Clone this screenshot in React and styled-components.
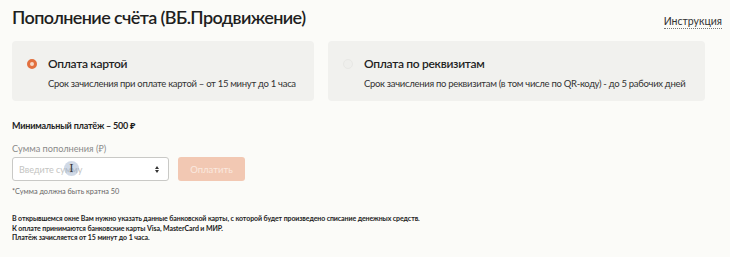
import React, { useState } from "react";
import styled, { createGlobalStyle } from "styled-components";

const GlobalStyle = createGlobalStyle`
  html, body {
    margin: 0;
    padding: 0;
    background: #fbfbf8;
    font-family: Lato, "Noto Sans", sans-serif;
    color: #222;
  }
`;

const Page = styled.div`
  width: 730px;
  height: 257px;
  box-sizing: border-box;
  padding: 5px 8px 0 12px;
  overflow: hidden;
`;

const Header = styled.div`
  display: flex;
  justify-content: space-between;
  align-items: flex-start;
`;

const Title = styled.h1`
  margin: 0;
  font-size: 18px;
  font-weight: 600;
  letter-spacing: -0.6px;
  line-height: 25px;
  color: #1f1f1f;
`;

const HelpLink = styled.a`
  margin-top: 10px;
  font-size: 10.5px;
  color: #333;
  text-decoration: none;
  border-bottom: 1px dotted #777;
  line-height: 13px;
`;

const Methods = styled.div`
  display: flex;
  gap: 14px;
  margin-top: 11px;
`;

const Card = styled.div`
  width: ${(p) => p.$w}px;
  height: 60px;
  box-sizing: border-box;
  background: #f1f1ee;
  border-radius: 4px;
  display: grid;
  grid-template-columns: 21px 1fr;
  align-items: center;
  padding: 15px 0 0 15px;
  align-content: start;
  row-gap: 7px;
  cursor: pointer;
`;

const Radio = styled.span`
  width: 10px;
  height: 10px;
  border-radius: 50%;
  box-sizing: border-box;
  border: ${(p) => (p.$on ? "3px solid #e2703f" : "1px solid #e8e8e5")};
  background: ${(p) => (p.$on ? "#f7d9c8" : "#efefec")};
`;

const CardTitle = styled.div`
  font-size: 12px;
  font-weight: 600;
  letter-spacing: -0.3px;
  line-height: 15px;
  color: #1f1f1f;
`;

const CardNote = styled.div`
  grid-column: 2;
  font-size: 9.5px;
  letter-spacing: -0.3px;
  line-height: 12px;
  color: #333;
  white-space: nowrap;
`;

const MinPay = styled.div`
  margin-top: 19px;
  font-size: 9px;
  font-weight: 700;
  letter-spacing: -0.2px;
  line-height: 12px;
  color: #1f1f1f;
`;

const FieldLabel = styled.div`
  margin-top: 10px;
  font-size: 9.2px;
  color: #8a8a8a;
  line-height: 13px;
`;

const FieldRow = styled.div`
  display: flex;
  gap: 9px;
  margin-top: 2px;
`;

const InputBox = styled.div`
  position: relative;
  width: 157px;
  height: 24px;
  box-sizing: border-box;
  border: 1px solid #c9c9c6;
  border-radius: 3px;
  background: #fff;
  display: flex;
  align-items: center;
`;

const Input = styled.input`
  flex: 1;
  min-width: 0;
  border: none;
  outline: none;
  background: transparent;
  font-family: inherit;
  font-size: 9px;
  padding: 0 6px;
  color: #222;
  &::placeholder {
    color: #c4c4c2;
  }
`;

const Spinner = styled.span`
  display: flex;
  flex-direction: column;
  align-items: center;
  margin-right: 9px;
  gap: 1px;
  &::before, &::after {
    content: "";
    width: 0;
    height: 0;
    border-left: 2.5px solid transparent;
    border-right: 2.5px solid transparent;
  }
  &::before {
    border-bottom: 3px solid #333;
  }
  &::after {
    border-top: 3px solid #333;
  }
`;

/* mouse cursor highlight captured in the screenshot */
const CursorMark = styled.span`
  position: absolute;
  left: 51px;
  top: 3px;
  width: 15px;
  height: 15px;
  border-radius: 50%;
  background: rgba(150, 170, 200, 0.45);
  display: flex;
  align-items: center;
  justify-content: center;
  font-family: "DejaVu Serif", serif;
  font-size: 11px;
  color: #333;
  pointer-events: none;
`;

const PayButton = styled.button`
  width: 67px;
  height: 24px;
  border: none;
  border-radius: 3px;
  background: #f2c8b3;
  color: #fbe9df;
  font-family: inherit;
  font-size: 9.5px;
  cursor: default;
`;

const Hint = styled.div`
  margin-top: 6px;
  font-size: 7.3px;
  color: #666;
`;

const Info = styled.div`
  margin-top: 18px;
  font-size: 7px;
  font-weight: 700;
  letter-spacing: -0.1px;
  line-height: 9.5px;
  color: #1d1d1d;
`;

export default function App() {
  const [method, setMethod] = useState("card");
  return (
    <>
      <GlobalStyle />
      <Page>
        <Header>
          <Title>Пополнение счёта (ВБ.Продвижение)</Title>
          <HelpLink href="#">Инструкция</HelpLink>
        </Header>
        <Methods>
          <Card $w={302} onClick={() => setMethod("card")}>
            <Radio $on={method === "card"} />
            <CardTitle>Оплата картой</CardTitle>
            <CardNote>Срок зачисления при оплате картой – от 15 минут до 1 часа</CardNote>
          </Card>
          <Card $w={377} onClick={() => setMethod("req")}>
            <Radio $on={method === "req"} />
            <CardTitle>Оплата по реквизитам</CardTitle>
            <CardNote>Срок зачисления по реквизитам (в том числе по QR-коду) - до 5 рабочих дней</CardNote>
          </Card>
        </Methods>
        <MinPay>Минимальный платёж – 500 ₽</MinPay>
        <FieldLabel>Сумма пополнения (₽)</FieldLabel>
        <FieldRow>
          <InputBox>
            <Input placeholder="Введите сумму" />
            <Spinner />
            <CursorMark>I</CursorMark>
          </InputBox>
          <PayButton>Оплатить</PayButton>
        </FieldRow>
        <Hint>*Сумма должна быть кратна 50</Hint>
        <Info>
          В открывшемся окне Вам нужно указать данные банковской карты, с которой будет произведено списание денежных средств.
          <br />
          К оплате принимаются банковские карты Visa, MasterCard и МИР.
          <br />
          Платёж зачисляется от 15 минут до 1 часа.
        </Info>
      </Page>
    </>
  );
}
